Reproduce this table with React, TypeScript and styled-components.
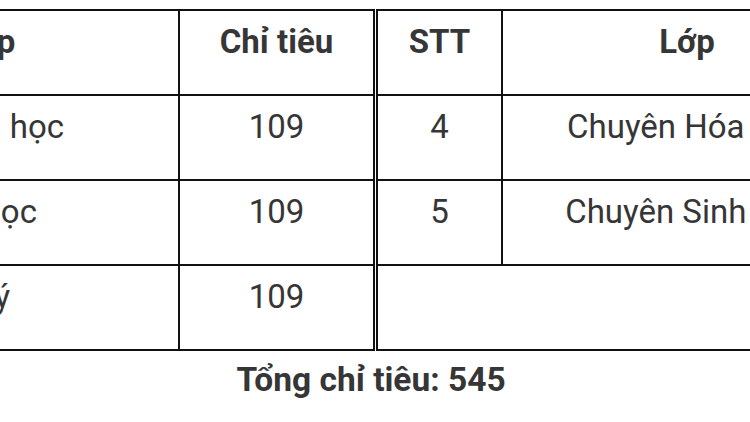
import React from "react";
import styled, { createGlobalStyle } from "styled-components";

const GlobalStyle = createGlobalStyle`
  html, body {
    margin: 0;
    padding: 0;
    background: #ffffff;
    overflow: hidden;
  }
  body {
    font-family: Roboto, "Liberation Sans", Arial, sans-serif;
    color: #363636;
  }
`;

const Page = styled.div`
  width: 750px;
  height: 422px;
  overflow: hidden;
`;

const Tables = styled.div`
  display: flex;
  gap: 1px;
  margin-left: -330px;
  padding-top: 9px;
`;

const Table = styled.table<{ $width: number }>`
  flex-shrink: 0;
  width: ${(p) => p.$width}px;
  table-layout: fixed;
  border-collapse: collapse;
  font-size: 33px;
  line-height: 48px;
  color: #363636;
`;

const HeadCell = styled.th`
  border: 2px solid #111111;
  padding: 7px 10px 28px;
  font-weight: 700;
  text-align: center;
  vertical-align: top;
  white-space: nowrap;
`;

const Cell = styled.td<{ $align?: "left" | "center" }>`
  border: 2px solid #111111;
  padding: 7px ${(p) => (p.$align === "left" ? "10px 28px 15px" : "10px 28px")};
  font-weight: 400;
  text-align: ${(p) => p.$align ?? "center"};
  vertical-align: top;
  white-space: nowrap;
  height: 48px;
`;

const Total = styled.div`
  margin-top: 5px;
  padding-right: 8px;
  font-size: 33.5px;
  line-height: 48px;
  font-weight: 700;
  text-align: center;
  color: #363636;
`;

interface Row {
  stt: number;
  name: string;
  quota: number;
}

const leftRows: Row[] = [
  { stt: 1, name: "Chuyên Toán học", quota: 109 },
  { stt: 2, name: "Chuyên Tin học", quota: 109 },
  { stt: 3, name: "Chuyên Vật lý", quota: 109 },
];

const rightRows: Row[] = [
  { stt: 4, name: "Chuyên Hóa học", quota: 109 },
  { stt: 5, name: "Chuyên Sinh học", quota: 109 },
];

const App: React.FC = () => {
  return (
    <Page>
      <GlobalStyle />
      <Tables>
        <Table $width={705}>
          <colgroup>
            <col style={{ width: 125 }} />
            <col style={{ width: 383 }} />
            <col style={{ width: 195 }} />
          </colgroup>
          <thead>
            <tr>
              <HeadCell>STT</HeadCell>
              <HeadCell>Lớp</HeadCell>
              <HeadCell>Chỉ tiêu</HeadCell>
            </tr>
          </thead>
          <tbody>
            {leftRows.map((row) => (
              <tr key={row.stt}>
                <Cell>{row.stt}</Cell>
                <Cell $align="left">{row.name}</Cell>
                <Cell>{row.quota}</Cell>
              </tr>
            ))}
          </tbody>
        </Table>
        <Table $width={692}>
          <colgroup>
            <col style={{ width: 125 }} />
            <col style={{ width: 370 }} />
            <col style={{ width: 195 }} />
          </colgroup>
          <thead>
            <tr>
              <HeadCell>STT</HeadCell>
              <HeadCell>Lớp</HeadCell>
              <HeadCell>Chỉ tiêu</HeadCell>
            </tr>
          </thead>
          <tbody>
            {rightRows.map((row) => (
              <tr key={row.stt}>
                <Cell>{row.stt}</Cell>
                <Cell>{row.name}</Cell>
                <Cell>{row.quota}</Cell>
              </tr>
            ))}
            <tr>
              <Cell colSpan={3}>&nbsp;</Cell>
            </tr>
          </tbody>
        </Table>
      </Tables>
      <Total>Tổng chỉ tiêu: 545</Total>
    </Page>
  );
};

export default App;
